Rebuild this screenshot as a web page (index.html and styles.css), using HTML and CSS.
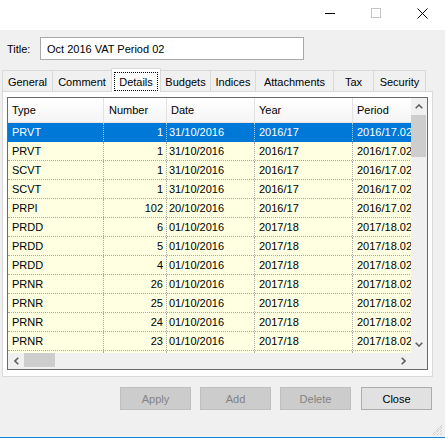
FILE: index.html
```html
<!DOCTYPE html>
<html>
<head>
<meta charset="utf-8">
<link rel="stylesheet" href="styles.css">
</head>
<body>
<div class="window">
  <div class="titlebar">
    <div class="cap"><svg width="10" height="10" viewBox="0 0 10 10"><line x1="0" y1="5.5" x2="10" y2="5.5" stroke="#000" stroke-width="1"/></svg></div>
    <div class="cap"><svg width="10" height="10" viewBox="0 0 10 10"><rect x="0.5" y="0.5" width="9" height="9" fill="none" stroke="#c4c4c4" stroke-width="1"/></svg></div>
    <div class="cap"><svg width="11" height="11" viewBox="0 0 11 11"><path d="M0.5 0.5L10.5 10.5M10.5 0.5L0.5 10.5" stroke="#000" stroke-width="1" fill="none"/></svg></div>
  </div>
  <div class="content">
    <div class="title-row">
      <label class="title-label">Title:</label>
      <div class="input">Oct 2016 VAT Period 02</div>
    </div>
    <div class="tabs">
      <div class="tab t1">General</div>
      <div class="tab t2">Comment</div>
      <div class="tab sel t3"><span class="focus">Details</span></div>
      <div class="tab t4">Budgets</div>
      <div class="tab t5">Indices</div>
      <div class="tab t6">Attachments</div>
      <div class="tab t7">Tax</div>
      <div class="tab t8">Security</div>
    </div>
    <div class="panel">
      <div class="grid">
        <div class="gmain">
          <div class="cells">
            <div class="hdr">
              <div class="c w1">Type</div>
              <div class="c w2">Number</div>
              <div class="c w3">Date</div>
              <div class="c w4">Year</div>
              <div class="c w5">Period</div>
            </div>
            <div class="row selected"><div class="c w1">PRVT</div><div class="c w2 num">1</div><div class="c w3 date">31/10/2016</div><div class="c w4">2016/17</div><div class="c w5">2016/17.02</div></div>
            <div class="row"><div class="c w1">PRVT</div><div class="c w2 num">1</div><div class="c w3 date">31/10/2016</div><div class="c w4">2016/17</div><div class="c w5">2016/17.02</div></div>
            <div class="row"><div class="c w1">SCVT</div><div class="c w2 num">1</div><div class="c w3 date">31/10/2016</div><div class="c w4">2016/17</div><div class="c w5">2016/17.02</div></div>
            <div class="row"><div class="c w1">SCVT</div><div class="c w2 num">1</div><div class="c w3 date">31/10/2016</div><div class="c w4">2016/17</div><div class="c w5">2016/17.02</div></div>
            <div class="row"><div class="c w1">PRPI</div><div class="c w2 num">102</div><div class="c w3 date">20/10/2016</div><div class="c w4">2016/17</div><div class="c w5">2016/17.02</div></div>
            <div class="row"><div class="c w1">PRDD</div><div class="c w2 num">6</div><div class="c w3 date">01/10/2016</div><div class="c w4">2017/18</div><div class="c w5">2017/18.02</div></div>
            <div class="row"><div class="c w1">PRDD</div><div class="c w2 num">5</div><div class="c w3 date">01/10/2016</div><div class="c w4">2017/18</div><div class="c w5">2017/18.02</div></div>
            <div class="row"><div class="c w1">PRDD</div><div class="c w2 num">4</div><div class="c w3 date">01/10/2016</div><div class="c w4">2017/18</div><div class="c w5">2017/18.02</div></div>
            <div class="row"><div class="c w1">PRNR</div><div class="c w2 num">26</div><div class="c w3 date">01/10/2016</div><div class="c w4">2017/18</div><div class="c w5">2017/18.02</div></div>
            <div class="row"><div class="c w1">PRNR</div><div class="c w2 num">25</div><div class="c w3 date">01/10/2016</div><div class="c w4">2017/18</div><div class="c w5">2017/18.02</div></div>
            <div class="row"><div class="c w1">PRNR</div><div class="c w2 num">24</div><div class="c w3 date">01/10/2016</div><div class="c w4">2017/18</div><div class="c w5">2017/18.02</div></div>
            <div class="row"><div class="c w1">PRNR</div><div class="c w2 num">23</div><div class="c w3 date">01/10/2016</div><div class="c w4">2017/18</div><div class="c w5">2017/18.02</div></div>
            <div class="row"><div class="c w1"></div><div class="c w2"></div><div class="c w3"></div><div class="c w4"></div><div class="c w5"></div></div>
          </div>
          <div class="vs">
            <div class="arrow"><svg width="8" height="5" viewBox="0 0 8 5"><polyline points="0.7,4.3 4,1 7.3,4.3" fill="none" stroke="#606060" stroke-width="1.6"/></svg></div>
            <div class="vthumb"></div>
            <div class="vspace"></div>
            <div class="arrow"><svg width="8" height="5" viewBox="0 0 8 5"><polyline points="0.7,0.7 4,4 7.3,0.7" fill="none" stroke="#606060" stroke-width="1.6"/></svg></div>
          </div>
        </div>
        <div class="hs">
          <div class="harrow"><svg width="5" height="8" viewBox="0 0 5 8"><polyline points="4.3,0.7 1,4 4.3,7.3" fill="none" stroke="#606060" stroke-width="1.6"/></svg></div>
          <div class="hthumb"></div>
          <div class="hspace"></div>
          <div class="harrow"><svg width="5" height="8" viewBox="0 0 5 8"><polyline points="0.7,0.7 4,4 0.7,7.3" fill="none" stroke="#606060" stroke-width="1.6"/></svg></div>
          <div class="corner"></div>
        </div>
      </div>
    </div>
    <div class="buttons">
      <div class="btn disabled">Apply</div>
      <div class="btn disabled">Add</div>
      <div class="btn disabled">Delete</div>
      <div class="btn close">Close</div>
    </div>
    <svg class="grip" width="12" height="12" viewBox="0 0 12 12">
      <path d="M11 3L3 11M11 6L6 11M11 9L9 11M11 1L1 11" stroke="#b8b8b8" stroke-width="1" stroke-dasharray="1 1" fill="none"/>
    </svg>
  </div>
</div>
</body>
</html>
```

FILE: styles.css
```css
* { box-sizing: border-box; }
html, body { margin: 0; padding: 0; }
body {
  width: 445px;
  height: 438px;
  overflow: hidden;
  font-family: "Liberation Sans", Arial, sans-serif;
  font-size: 11px;
  color: #000;
  background: #f0f0f0;
}
.window {
  width: 445px;
  height: 438px;
  display: flex;
  flex-direction: column;
  border-bottom: 1px solid #1883d7;
}
.titlebar {
  height: 30px;
  flex: none;
  background: #fff;
  display: flex;
  justify-content: flex-end;
}
.cap {
  width: 46px;
  height: 30px;
  display: flex;
  justify-content: center;
  align-items: flex-start;
  padding-top: 8px;
}
.content {
  flex: 1;
  position: relative;
  padding: 7px 12px 0 2px;
  display: flex;
  flex-direction: column;
}
.title-row {
  display: flex;
  align-items: center;
  height: 23px;
}
.title-label {
  width: 38px;
  padding-left: 5px;
}
.input {
  width: 264px;
  height: 23px;
  border: 1px solid #a9a9a9;
  background: #fff;
  padding-left: 6px;
  display: flex;
  align-items: center;
}
.tabs {
  display: flex;
  align-items: flex-end;
  height: 23px;
  margin-top: 8px;
}
.tab {
  flex: none;
  height: 21px;
  border: 1px solid #d9d9d9;
  border-bottom: none;
  margin-left: -1px;
  display: flex;
  align-items: center;
  justify-content: center;
  background: #f0f0f0;
  padding-top: 1px;
}
.tab.t1 { margin-left: 0; width: 51px; }
.tab.t2 { width: 60px; }
.tab.t3 { width: 50px; }
.tab.t4 { width: 51px; }
.tab.t5 { width: 46px; }
.tab.t6 { width: 79px; }
.tab.t7 { width: 41px; }
.tab.t8 { width: 53px; }
.tab.sel {
  height: 24px;
  margin-bottom: -1px;
  background: #fff;
  position: relative;
  z-index: 1;
  padding: 3px 2px 1px 2px;
  align-items: stretch;
}
.focus {
  flex: 1;
  border: 1px dotted #000;
  display: flex;
  align-items: center;
  justify-content: center;
}
.panel {
  width: 431px;
  height: 286px;
  flex: none;
  border: 1px solid #d9d9d9;
  background: #fff;
  padding: 5px 4px 0 4px;
}
.grid {
  width: 421px;
  height: 273px;
  border: 1px solid #6a6a6a;
  background: #f0f0f0;
  display: flex;
  flex-direction: column;
}
.gmain {
  display: flex;
  height: 255px;
  flex: none;
}
.cells {
  width: 403px;
  flex: none;
  overflow: hidden;
  background: #ffffe1;
}
.hdr {
  display: flex;
  height: 25px;
  background: linear-gradient(#ffffff, #f4f4f4);
  width: 430px;
}
.hdr .c {
  border-right: 1px solid #e2e2e2;
  border-bottom: 1px solid #e2e2e2;
  display: flex;
  align-items: center;
  padding-left: 4px;
  padding-bottom: 1px;
}
.hdr .w2 { padding-left: 5px; }
.hdr .w3 { padding-left: 4px; }
.row {
  display: flex;
  height: 19px;
  width: 430px;
  border-bottom: 1px dotted #a8a8a8;
}
.c {
  flex: none;
  white-space: nowrap;
  overflow: hidden;
  display: flex;
  align-items: center;
  padding-left: 4px;
}
.row .c { border-right: 1px dotted #a8a8a8; }
.row .num { justify-content: flex-end; padding-left: 0; padding-right: 3px; }
.row .date { padding-left: 2px; }
.row.selected { background: #0078d7; color: #fff; border-bottom-color: #0078d7; }
.row.selected .c { border-right-color: #9cc8ef; }
.w1 { width: 96px; }
.w2 { width: 63px; }
.w3 { width: 88px; }
.w4 { width: 98px; }
.w5 { width: 85px; }
.vs {
  width: 16px;
  flex: none;
  display: flex;
  flex-direction: column;
  background: #f0f0f0;
}
.arrow {
  height: 17px;
  flex: none;
  display: flex;
  align-items: center;
  justify-content: center;
}
.vthumb {
  height: 42px;
  flex: none;
  background: #cdcdcd;
  margin-right: 1px;
}
.vspace { flex: 1; }
.hs {
  height: 16px;
  flex: none;
  display: flex;
  background: #f0f0f0;
}
.harrow {
  width: 16px;
  flex: none;
  display: flex;
  align-items: center;
  justify-content: center;
}
.hthumb {
  width: 31px;
  flex: none;
  background: #cdcdcd;
  margin-bottom: 2px;
}
.hspace { flex: 1; }
.corner { width: 16px; flex: none; }
.buttons {
  display: flex;
  justify-content: flex-end;
  gap: 9px;
  margin-top: 10px;
  padding-right: 1px;
}
.btn {
  width: 71px;
  height: 23px;
  border: 1px solid #bfbfbf;
  background: #cccccc;
  color: #838383;
  display: flex;
  align-items: center;
  justify-content: center;
}
.btn.close {
  background: #e1e1e1;
  border-color: #adadad;
  color: #000;
  margin-left: 1px;
}
.grip {
  position: absolute;
  right: 2px;
  bottom: 1px;
}
```
